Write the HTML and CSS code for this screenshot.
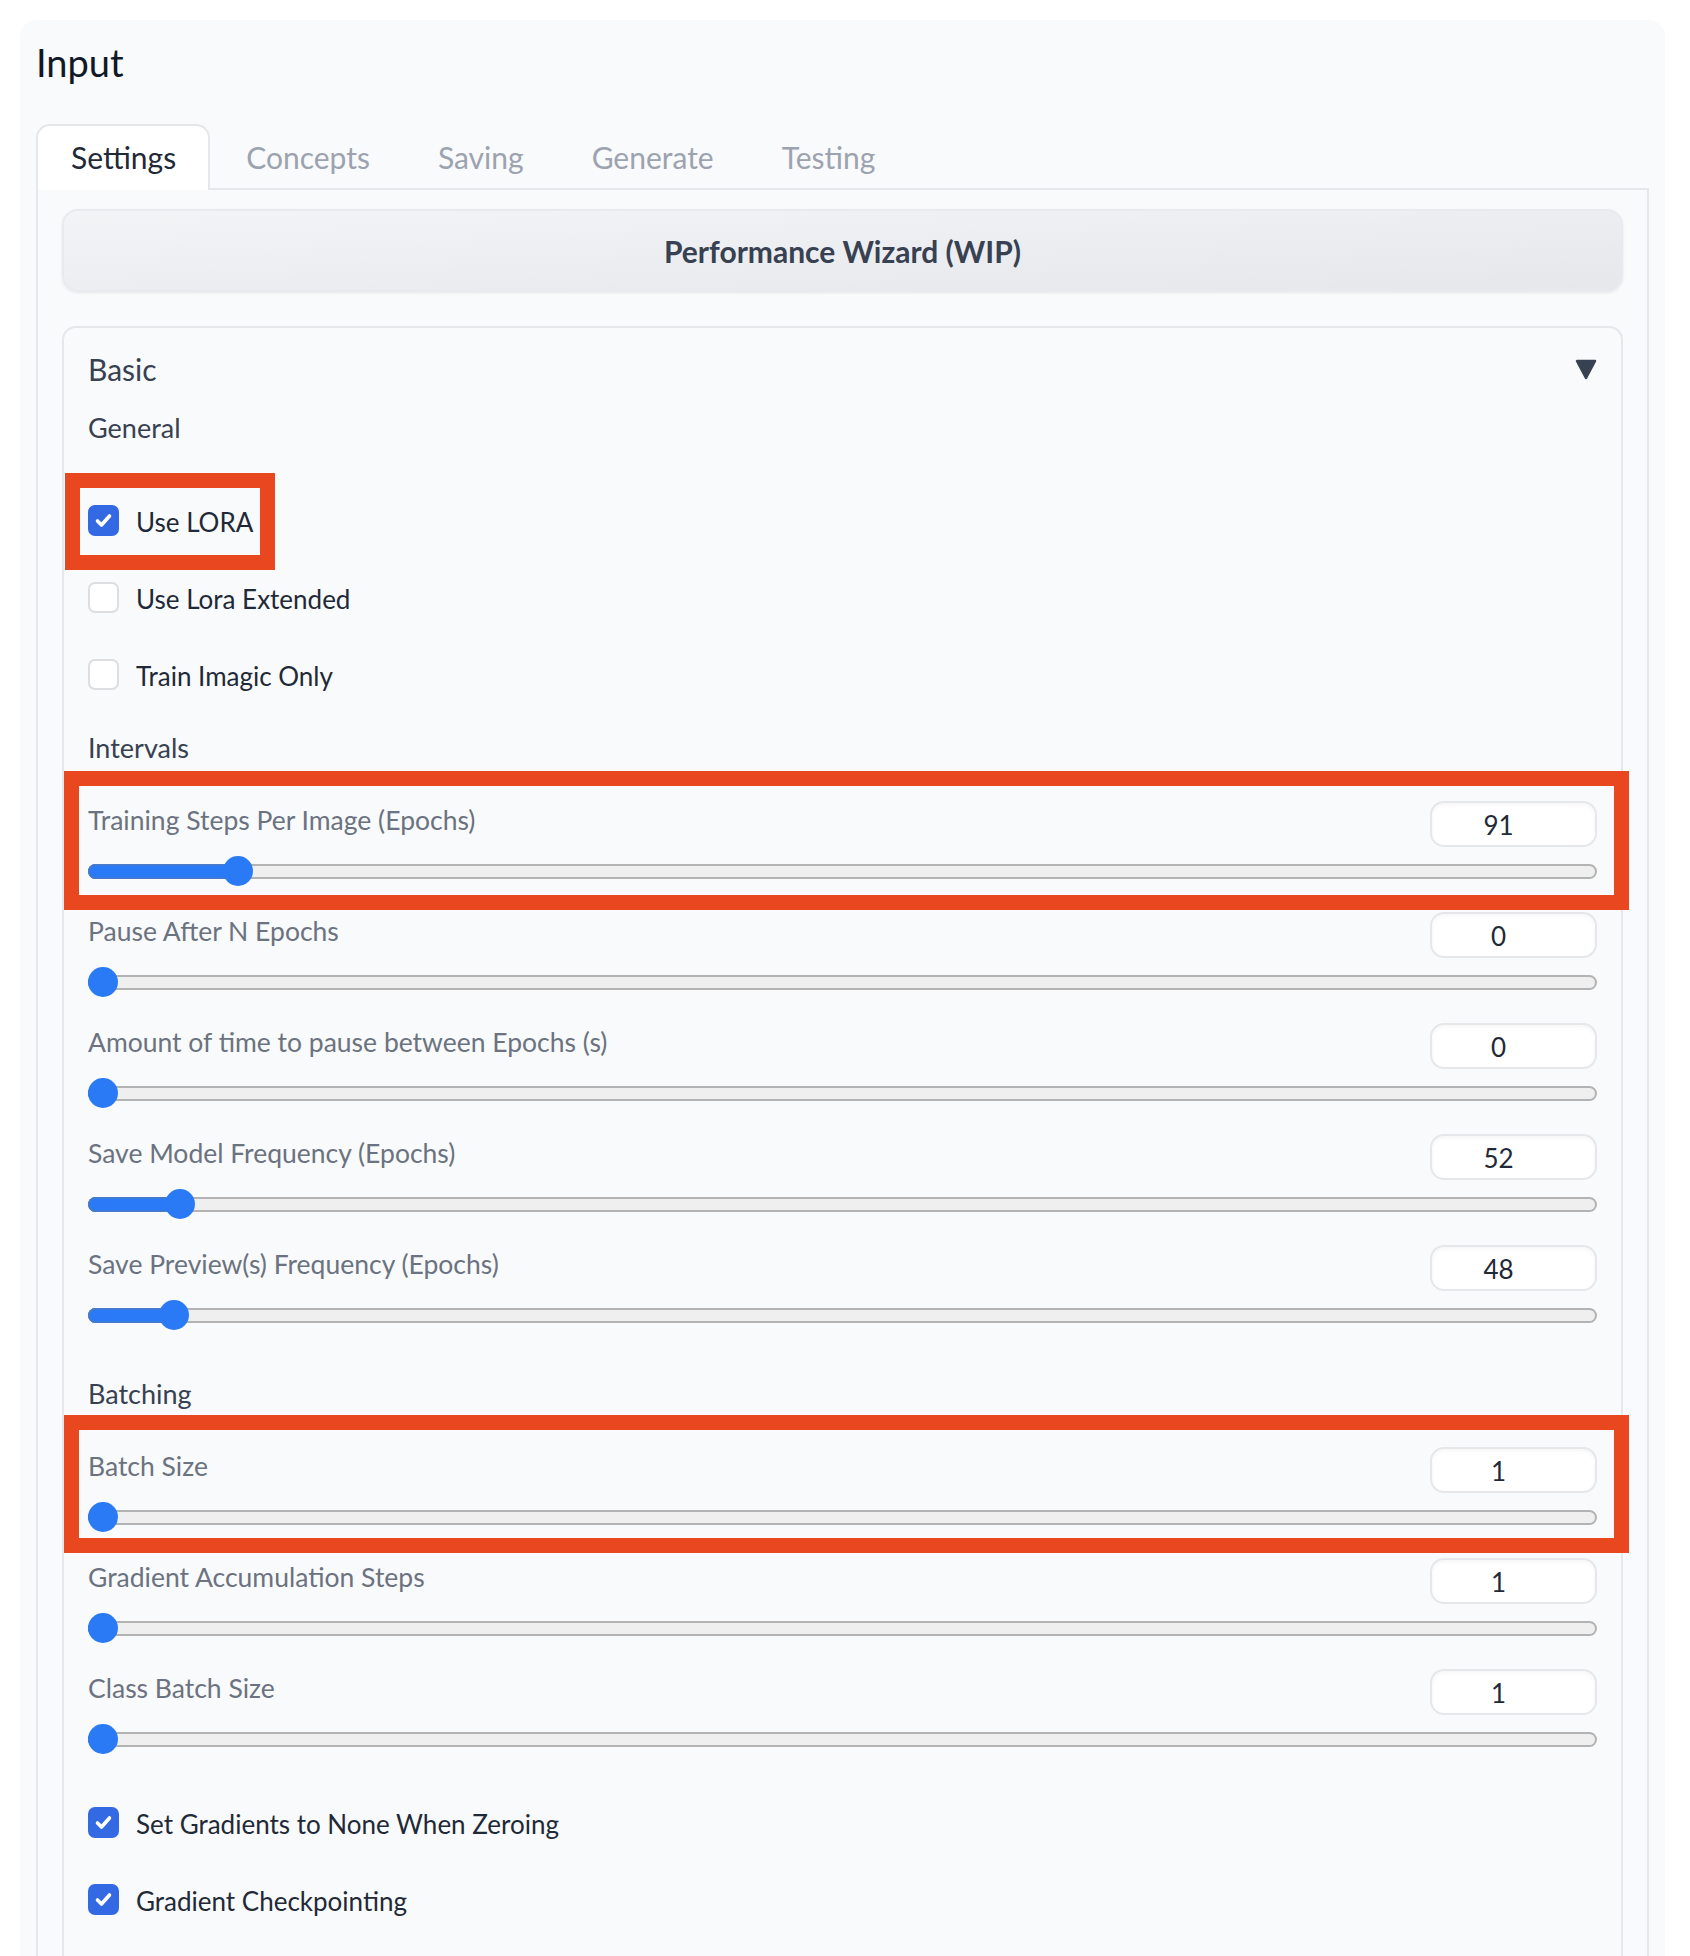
FILE: index.html
```html
<!DOCTYPE html>
<html lang="en">
<head>
<meta charset="utf-8">
<title>Input</title>
<link rel="stylesheet" href="styles.css">
</head>
<body>
<div class="card">
  <h2 class="title">Input</h2>
  <div class="tabs">
    <div class="tab active">Settings</div>
    <div class="tab">Concepts</div>
    <div class="tab">Saving</div>
    <div class="tab">Generate</div>
    <div class="tab">Testing</div>
  </div>
  <div class="tabpanel">
    <button class="wizard">Performance Wizard (WIP)</button>
    <div class="accordion">
      <div class="acc-head">
        <span class="acc-title">Basic</span>
        <svg class="caret" width="22" height="21" viewBox="0 0 22 21"><polygon points="2,2 20,2 11,19" fill="#374151" stroke="#374151" stroke-width="2.5" stroke-linejoin="round"/></svg>
      </div>

      <div class="section-title sec-general">General</div>
      <div class="checks checks-general">
        <div class="check-row"><label class="check hl hl-check"><span class="box on"><svg width="31" height="31" viewBox="0 0 31 31"><path d="M9.5 16l4 4L21.5 11" fill="none" stroke="#fff" stroke-width="3.6" stroke-linecap="round" stroke-linejoin="round"/></svg></span><span class="check-text">Use LORA</span></label></div>
        <div class="check-row"><label class="check"><span class="box"></span><span class="check-text">Use Lora Extended</span></label></div>
        <div class="check-row"><label class="check"><span class="box"></span><span class="check-text">Train Imagic Only</span></label></div>
      </div>

      <div class="section-title sec-intervals">Intervals</div>
      <div class="sliders sliders-intervals">
        <div class="slider-row hl hl-row1">
          <div class="slider-head"><span class="slider-label">Training Steps Per Image (Epochs)</span><span class="num">91</span></div>
          <div class="range" style="--v:0.091"><div class="track"></div><div class="fill"></div><div class="thumb"></div></div>
        </div>
        <div class="slider-row">
          <div class="slider-head"><span class="slider-label">Pause After N Epochs</span><span class="num">0</span></div>
          <div class="range" style="--v:0"><div class="track"></div><div class="fill"></div><div class="thumb"></div></div>
        </div>
        <div class="slider-row">
          <div class="slider-head"><span class="slider-label">Amount of time to pause between Epochs (s)</span><span class="num">0</span></div>
          <div class="range" style="--v:0"><div class="track"></div><div class="fill"></div><div class="thumb"></div></div>
        </div>
        <div class="slider-row">
          <div class="slider-head"><span class="slider-label">Save Model Frequency (Epochs)</span><span class="num">52</span></div>
          <div class="range" style="--v:0.052"><div class="track"></div><div class="fill"></div><div class="thumb"></div></div>
        </div>
        <div class="slider-row">
          <div class="slider-head"><span class="slider-label">Save Preview(s) Frequency (Epochs)</span><span class="num">48</span></div>
          <div class="range" style="--v:0.048"><div class="track"></div><div class="fill"></div><div class="thumb"></div></div>
        </div>
      </div>

      <div class="section-title sec-batching">Batching</div>
      <div class="sliders sliders-batching">
        <div class="slider-row hl hl-row2">
          <div class="slider-head"><span class="slider-label">Batch Size</span><span class="num">1</span></div>
          <div class="range" style="--v:0"><div class="track"></div><div class="fill"></div><div class="thumb"></div></div>
        </div>
        <div class="slider-row">
          <div class="slider-head"><span class="slider-label">Gradient Accumulation Steps</span><span class="num">1</span></div>
          <div class="range" style="--v:0"><div class="track"></div><div class="fill"></div><div class="thumb"></div></div>
        </div>
        <div class="slider-row">
          <div class="slider-head"><span class="slider-label">Class Batch Size</span><span class="num">1</span></div>
          <div class="range" style="--v:0"><div class="track"></div><div class="fill"></div><div class="thumb"></div></div>
        </div>
      </div>

      <div class="checks checks-batching">
        <div class="check-row"><label class="check"><span class="box on"><svg width="31" height="31" viewBox="0 0 31 31"><path d="M9.5 16l4 4L21.5 11" fill="none" stroke="#fff" stroke-width="3.6" stroke-linecap="round" stroke-linejoin="round"/></svg></span><span class="check-text">Set Gradients to None When Zeroing</span></label></div>
        <div class="check-row"><label class="check"><span class="box on"><svg width="31" height="31" viewBox="0 0 31 31"><path d="M9.5 16l4 4L21.5 11" fill="none" stroke="#fff" stroke-width="3.6" stroke-linecap="round" stroke-linejoin="round"/></svg></span><span class="check-text">Gradient Checkpointing</span></label></div>
      </div>
    </div>
  </div>
</div>
</body>
</html>
```
FILE: styles.css
```css
* { box-sizing: border-box; }
html, body { margin: 0; padding: 0; background: #ffffff; }
body {
  font-family: Lato, "Noto Sans", sans-serif;
  color: #1f2937;
}

.card {
  margin: 20px 25px 0 20px;
  padding: 19px 16px 0 16px;
  background: #f9fafb;
  border-radius: 16px 16px 0 0;
  height: 2000px;
}

.title {
  margin: 0;
  font-size: 38px;
  line-height: 46px;
  font-weight: 400;
  color: #111827;
}

.tabs {
  display: flex;
  margin-top: 39px;
  height: 64px;
}
.tab {
  position: relative;
  z-index: 1;
  height: 66px;
  margin-bottom: -2px;
  padding: 0 30px 0 34px;
  border: 2px solid transparent;
  border-bottom: 0;
  border-radius: 14px 14px 0 0;
  font-size: 30px;
  line-height: 63px;
  color: #9ca3af;
}
.tab.active {
  padding: 0 32px 0 33px;
  background: #ffffff;
  border-color: #e5e7eb;
  color: #1f2937;
}

.tabpanel {
  border: 2px solid #e5e7eb;
  padding: 19px 24px 0 24px;
  height: 1900px;
}

.wizard {
  display: block;
  width: 100%;
  height: 83px;
  border: 2px solid #e9eaee;
  border-radius: 16px;
  background: linear-gradient(to bottom right, #f3f4f6, #e5e7eb);
  box-shadow: 0 1px 3px rgba(0, 0, 0, 0.08);
  font-family: Lato, "Noto Sans", sans-serif;
  font-weight: 700;
  font-size: 30px;
  color: #374151;
  padding: 0;
}

.accordion {
  margin-top: 34px;
  border: 2px solid #e5e7eb;
  border-radius: 14px;
  padding: 21px 24px 40px 24px;
  height: 1700px;
}

.acc-head {
  display: flex;
  justify-content: space-between;
  align-items: center;
  height: 40px;
}
.acc-title {
  font-size: 30px;
  line-height: 40px;
  color: #374151;
}
.caret { display: block; }

.section-title {
  font-size: 27px;
  line-height: 36px;
  color: #374151;
}
.sec-general { margin-top: 21px; }
.checks-general { margin-top: 36px; }
.sec-intervals { margin-top: 17px; }
.sliders-intervals { margin-top: 24px; }
.sec-batching { margin-top: 31px; }
.sliders-batching { margin-top: 24px; }
.checks-batching { margin-top: 15px; }

.check-row {
  height: 77px;
  display: flex;
  align-items: center;
}
.check {
  display: inline-flex;
  align-items: center;
  height: 77px;
  gap: 17px;
}
.box {
  width: 31px;
  height: 31px;
  border-radius: 7px;
  background: #ffffff;
  border: 2px solid #dcdee2;
  flex: none;
}
.box.on {
  background: #3469e4;
  border-color: #3469e4;
  position: relative;
}
.box.on svg {
  position: absolute;
  left: -2px;
  top: -2px;
}
.check-text {
  font-size: 26px;
  line-height: 34px;
  padding-top: 2px;
  color: #1f2937;
}

.slider-row {
  height: 111px;
  padding-top: 11px;
}
.slider-head {
  display: flex;
  justify-content: space-between;
  align-items: flex-start;
  height: 46px;
}
.slider-label {
  font-size: 26.5px;
  line-height: 34px;
  padding-top: 2px;
  color: #6b7280;
}
.num {
  width: 167px;
  height: 46px;
  border: 2px solid #e6e7eb;
  border-radius: 14px;
  background: #ffffff;
  box-shadow: inset 0 2px 4px rgba(0, 0, 0, 0.04);
  text-align: center;
  padding-right: 30px;
  font-size: 26px;
  line-height: 44px;
  color: #1f2937;
}

.range {
  position: relative;
  height: 30px;
  margin-top: 9px;
}
.track {
  position: absolute;
  left: 0;
  right: 0;
  top: 7.5px;
  height: 15px;
  border: 2px solid #b3b3b3;
  border-radius: 8px;
  background: #efefef;
}
.fill {
  position: absolute;
  left: 0;
  top: 7.5px;
  height: 15px;
  width: calc(15px + var(--v) * (100% - 30px));
  border-radius: 8px 0 0 8px;
  background: #2a79f6;
  box-shadow: inset 0 0 0 1.5px #4a7bc4;
}
.thumb {
  position: absolute;
  top: 0;
  left: calc(var(--v) * (100% - 30px));
  width: 30px;
  height: 30px;
  border-radius: 50%;
  background: #2a7af6;
}

/* red annotation boxes */
.hl { position: relative; }
.hl::after {
  content: "";
  position: absolute;
  border: 15px solid #e9471f;
  pointer-events: none;
}
.hl-check::after { left: -23px; right: -22px; top: -9px; bottom: -11px; }
.hl-row1::after { left: -24px; right: -32px; top: -19px; bottom: -9px; }
.hl-row2::after { left: -24px; right: -32px; top: -21px; bottom: -6px; }
```
